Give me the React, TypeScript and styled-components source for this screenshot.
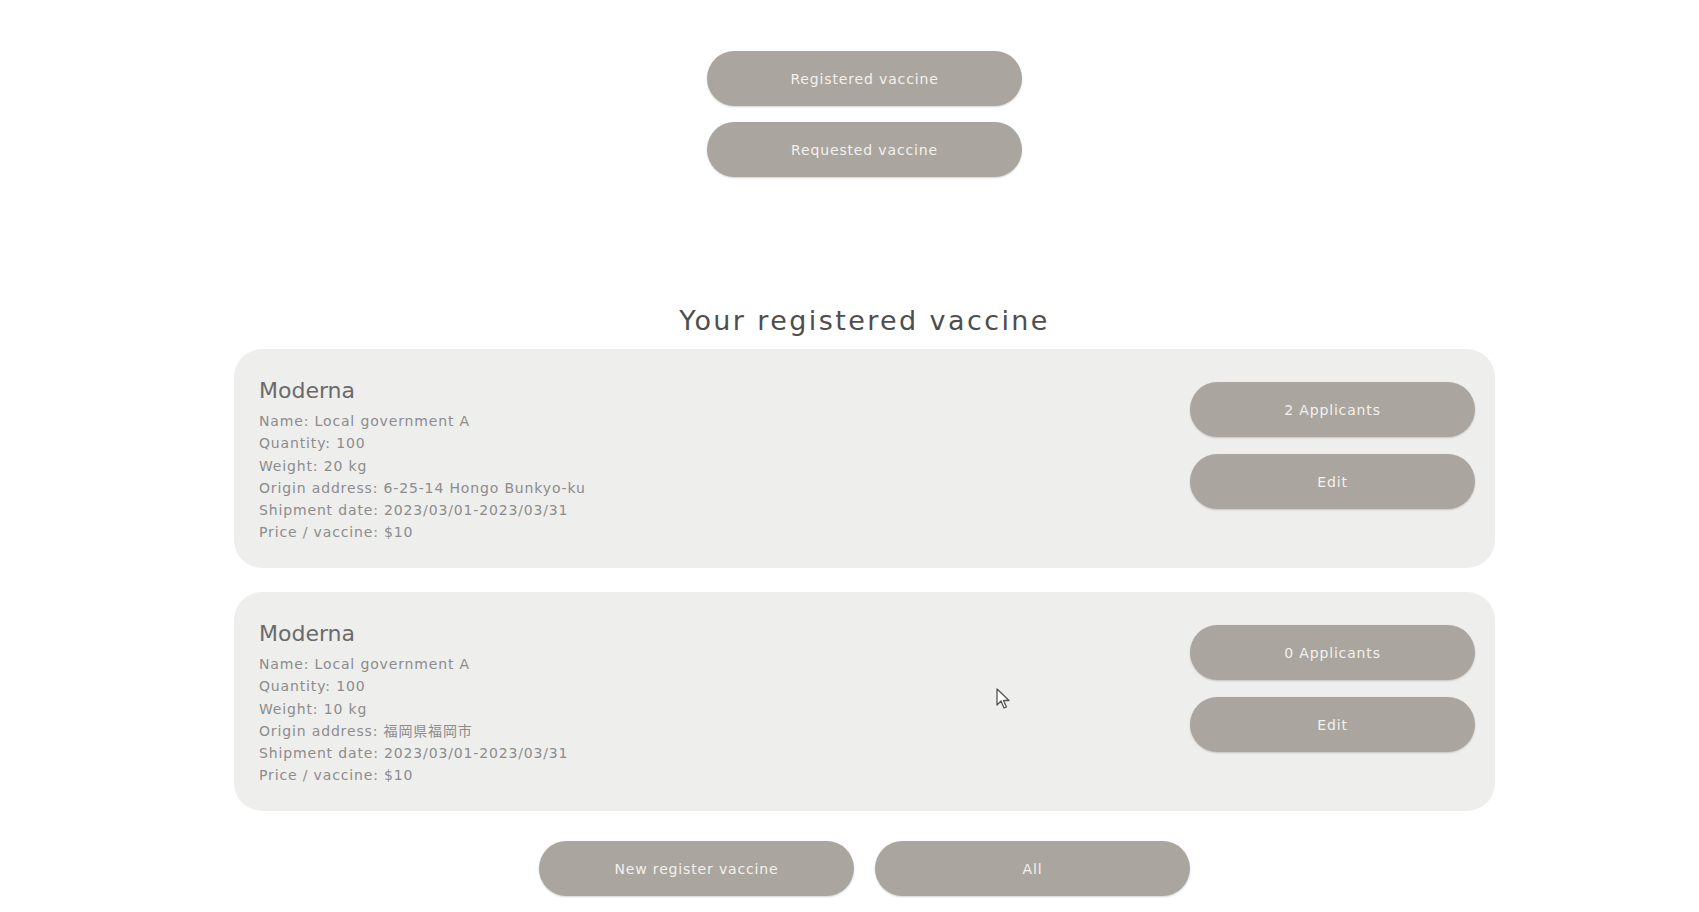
import React, { FC } from "react";
import styled, { createGlobalStyle } from "styled-components";

const GlobalStyle = createGlobalStyle`
  html, body {
    margin: 0;
    padding: 0;
    background: #ffffff;
  }
  body {
    font-family: "DejaVu Sans", "Noto Sans CJK JP", sans-serif;
  }
`;

const Page = styled.div`
  position: relative;
  min-height: 912px;
  display: flex;
  flex-direction: column;
  align-items: center;
  padding-left: 30px;
  padding-top: 51px;
  box-sizing: border-box;
`;

const TopNav = styled.div`
  display: flex;
  flex-direction: column;
  gap: 16px;
`;

interface PillProps {
  width?: number;
}

const Pill = styled.button<PillProps>`
  width: ${(p) => p.width || 315}px;
  height: 55px;
  border: none;
  border-radius: 28px;
  background: #aaa59e;
  color: #f3f1ee;
  font-family: "DejaVu Sans", sans-serif;
  font-size: 14px;
  letter-spacing: 0.85px;
  box-shadow: 0 1px 2px rgba(0, 0, 0, 0.18);
  cursor: pointer;
`;

const Heading = styled.h2`
  margin: 124px 0 0;
  height: 40px;
  line-height: 40px;
  font-weight: normal;
  font-size: 27px;
  letter-spacing: 2.4px;
  color: #4e4e4e;
`;

const CardList = styled.div`
  margin-top: 8px;
  display: flex;
  flex-direction: column;
  gap: 24px;
`;

const Card = styled.div`
  width: 1261px;
  height: 219px;
  box-sizing: border-box;
  padding: 28px 20px 25px 25px;
  border-radius: 28px;
  background: #eeeeed;
  display: flex;
  justify-content: space-between;
  align-items: flex-start;
`;

const Info = styled.div`
  display: flex;
  flex-direction: column;
`;

const VaccineName = styled.div`
  font-size: 22px;
  line-height: 28px;
  color: #6a6a6a;
  margin-bottom: 5px;
`;

const InfoLine = styled.div`
  font-size: 14px;
  line-height: 22.3px;
  letter-spacing: 0.85px;
  color: #8c8c8c;
`;

const Actions = styled.div`
  margin-top: 5px;
  display: flex;
  flex-direction: column;
  gap: 17px;
`;

const BottomBar = styled.div`
  margin-top: 30px;
  display: flex;
  gap: 21px;
`;

const Cursor = styled.svg`
  position: absolute;
  left: 996px;
  top: 688px;
`;

interface Vaccine {
  name: string;
  owner: string;
  quantity: number;
  weight: string;
  origin: string;
  shipment: string;
  price: string;
  applicants: number;
}

const vaccines: Vaccine[] = [
  {
    name: "Moderna",
    owner: "Local government A",
    quantity: 100,
    weight: "20 kg",
    origin: "6-25-14 Hongo Bunkyo-ku",
    shipment: "2023/03/01-2023/03/31",
    price: "$10",
    applicants: 2,
  },
  {
    name: "Moderna",
    owner: "Local government A",
    quantity: 100,
    weight: "10 kg",
    origin: "福岡県福岡市",
    shipment: "2023/03/01-2023/03/31",
    price: "$10",
    applicants: 0,
  },
];

const App: FC = () => {
  return (
    <>
      <GlobalStyle />
      <Page>
        <TopNav>
          <Pill>Registered vaccine</Pill>
          <Pill>Requested vaccine</Pill>
        </TopNav>

        <Heading>Your registered vaccine</Heading>

        <CardList>
          {vaccines.map((v, i) => (
            <Card key={i}>
              <Info>
                <VaccineName>{v.name}</VaccineName>
                <InfoLine>Name: {v.owner}</InfoLine>
                <InfoLine>Quantity: {v.quantity}</InfoLine>
                <InfoLine>Weight: {v.weight}</InfoLine>
                <InfoLine>Origin address: {v.origin}</InfoLine>
                <InfoLine>Shipment date: {v.shipment}</InfoLine>
                <InfoLine>Price / vaccine: {v.price}</InfoLine>
              </Info>
              <Actions>
                <Pill width={285}>{v.applicants} Applicants</Pill>
                <Pill width={285}>Edit</Pill>
              </Actions>
            </Card>
          ))}
        </CardList>

        <BottomBar>
          <Pill>New register vaccine</Pill>
          <Pill>All</Pill>
        </BottomBar>

        <Cursor width="14" height="22" viewBox="0 0 14 22">
          <path
            d="M1 1 L1 17 L5 13 L8 20 L10.5 19 L7.5 12.5 L13 12.5 Z"
            fill="#ffffff"
            stroke="#555555"
            strokeWidth="1.3"
            strokeLinejoin="round"
          />
        </Cursor>
      </Page>
    </>
  );
};

export default App;
